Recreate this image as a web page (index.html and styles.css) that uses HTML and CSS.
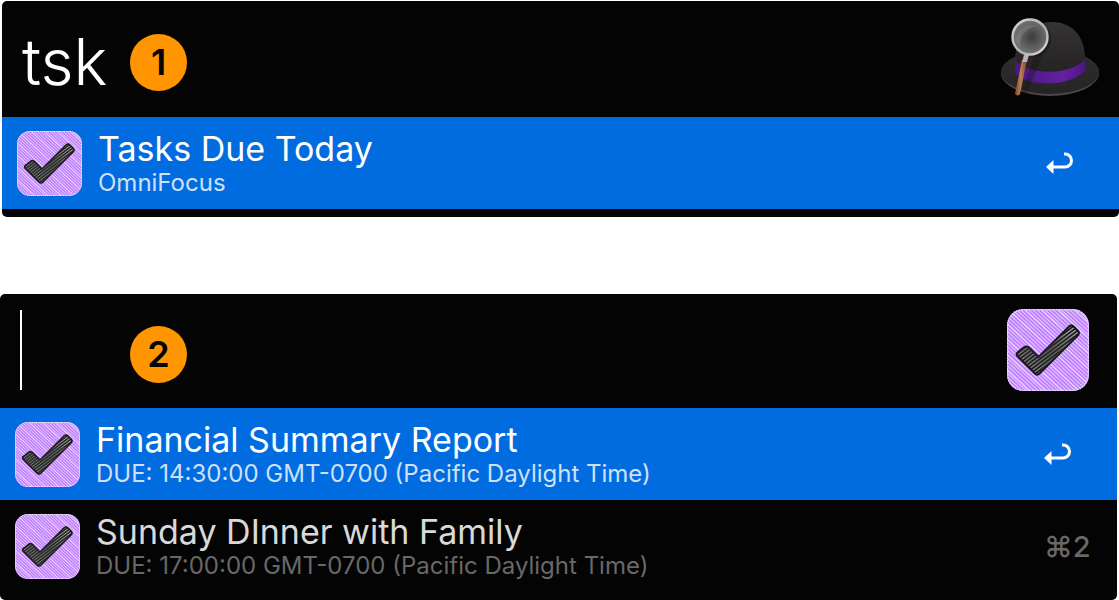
FILE: index.html
```html
<!DOCTYPE html>
<html lang="en">
<head>
    <meta charset="UTF-8">
    <meta name="viewport" content="width=device-width, initial-scale=1.0">
    <title>Tasks Due Today</title>
    <link rel="stylesheet" href="styles.css">
</head>
<body>
    <!-- shared icons -->
    <svg class="defs" width="0" height="0" aria-hidden="true">
        <defs>
            <pattern id="hatch" width="2.2" height="2.2" patternUnits="userSpaceOnUse" patternTransform="rotate(-47)">
                <rect width="2.2" height="2.2" fill="#bf7dff"/>
                <rect width="0.8" height="2.2" fill="#e6ccff"/>
            </pattern>
            <pattern id="hatchWide" width="9" height="9" patternUnits="userSpaceOnUse" patternTransform="rotate(-47)">
                <rect width="0.8" height="9" fill="#fff" opacity="0.55"/>
            </pattern>
            <pattern id="ink" width="2.4" height="2.4" patternUnits="userSpaceOnUse" patternTransform="rotate(53)">
                <rect width="2.4" height="2.4" fill="#141414"/>
                <rect width="1" height="2.4" fill="#c4c4c4"/>
            </pattern>
            <linearGradient id="inkShade" x1="0" y1="1" x2="1" y2="0">
                <stop offset="0" stop-color="#222" stop-opacity="0.2"/>
                <stop offset="0.5" stop-color="#333" stop-opacity="0.7"/>
                <stop offset="1" stop-color="#222" stop-opacity="0"/>
            </linearGradient>
            <symbol id="task" viewBox="0 0 65 65">
                <rect width="65" height="65" rx="13" fill="url(#hatch)"/>
                <rect x="0.5" y="0.5" width="64" height="64" rx="12.5" fill="url(#hatchWide)" stroke="#f0e0ff" stroke-width="1" stroke-dasharray="1.2 0.8"/>
                <path d="M9 34 L14 30 Q16 29 18 31 L25 38 L49 14 Q51 12 53 14 L56 17 Q58 19 56 21 L26 51 Q24 53 22 51 L8 37 Q7 35 9 34Z" fill="url(#ink)" stroke="#161616" stroke-width="1.6" stroke-linejoin="round"/>
                <path d="M9 34 L14 30 Q16 29 18 31 L25 38 L49 14 Q51 12 53 14 L56 17 Q58 19 56 21 L26 51 Q24 53 22 51 L8 37 Q7 35 9 34Z" fill="url(#inkShade)"/>
            </symbol>
            <symbol id="enter" viewBox="0 0 28 24">
                <path d="M18 3 H19 A6 6 0 0 1 19 16 H6" fill="none" stroke="#fff" stroke-width="3"/>
                <path d="M0 16 L7.5 9 V23Z" fill="#fff"/>
            </symbol>
        </defs>
    </svg>

    <section class="panel first">
        <div class="search">
            <input class="query" type="text" value="tsk" aria-label="Search">
            <span class="badge">1</span>
            <svg class="hat" viewBox="0 0 98 82" aria-hidden="true">
                <defs>
                    <linearGradient id="crown" x1="0" y1="0" x2="0" y2="1">
                        <stop offset="0" stop-color="#363334"/>
                        <stop offset="1" stop-color="#211f20"/>
                    </linearGradient>
                    <linearGradient id="brim" x1="0" y1="0" x2="0" y2="1">
                        <stop offset="0" stop-color="#302e2f"/>
                        <stop offset="1" stop-color="#252324"/>
                    </linearGradient>
                    <linearGradient id="band">
                        <stop offset="0" stop-color="#4a1780"/>
                        <stop offset="0.35" stop-color="#551c8e"/>
                        <stop offset="0.7" stop-color="#6420a0"/>
                        <stop offset="1" stop-color="#4d1782"/>
                    </linearGradient>
                    <radialGradient id="glass" cx="0.55" cy="0.5" r="0.6">
                        <stop offset="0" stop-color="#3c3c3c"/>
                        <stop offset="1" stop-color="#808080"/>
                    </radialGradient>
                    <linearGradient id="rim" x1="0" y1="0" x2="1" y2="1">
                        <stop offset="0" stop-color="#d4d4d4"/>
                        <stop offset="0.6" stop-color="#b2b2b2"/>
                        <stop offset="1" stop-color="#e0e0e0"/>
                    </linearGradient>
                    <linearGradient id="wood">
                        <stop offset="0" stop-color="#7d4c30"/>
                        <stop offset="0.5" stop-color="#bd8055"/>
                        <stop offset="1" stop-color="#74452b"/>
                    </linearGradient>
                </defs>
                <ellipse cx="49" cy="56" rx="49" ry="23" fill="#494748"/>
                <ellipse cx="49" cy="55" rx="49" ry="22" fill="url(#brim)"/>
                <path d="M14 58 V42 C15 16 33 5 51 5 C70 5 84 18 84 42 V55 C70 68 28 68 14 58Z" fill="url(#crown)"/>
                <path d="M14 43 C29 59 68 58 84 43 V54 C68 70 30 70 14 57Z" fill="url(#band)"/>
                <path d="M33 38 L43 35 L25 77 L20 79Z" fill="#111" opacity="0.3"/>
                <circle cx="32" cy="22" r="18" fill="#121212" opacity="0.5"/>
                <path d="M21 43 L26 43 L19 77 Q17 80 14 77Z" fill="url(#wood)"/>
                <path d="M23 38 H28 L26 45 H21Z" fill="#b4b4b4"/>
                <circle cx="29" cy="20" r="17.5" fill="url(#glass)" stroke="url(#rim)" stroke-width="2.4"/>
                <path d="M15 25 C15 13 23 7 36 8 C25 12 19 18 19 29Z" fill="#aaa" opacity="0.25"/>
            </svg>
        </div>
        <button class="row selected" type="button">
            <svg class="icon" aria-hidden="true"><use href="#task"/></svg>
            <span class="text">
                <span class="title">Tasks Due Today</span>
                <span class="subtitle">OmniFocus</span>
            </span>
            <span class="key"><svg class="enter" aria-hidden="true"><use href="#enter"/></svg></span>
        </button>
    </section>

    <section class="panel second">
        <div class="search">
            <span class="caret"></span>
            <input class="query" type="text" value="" aria-label="Filter tasks">
            <span class="badge">2</span>
            <svg class="big" aria-hidden="true"><use href="#task"/></svg>
        </div>
        <button class="row selected" type="button">
            <svg class="icon" aria-hidden="true"><use href="#task"/></svg>
            <span class="text">
                <span class="title">Financial Summary Report</span>
                <span class="subtitle">DUE: 14:30:00 GMT-0700 (Pacific Daylight Time)</span>
            </span>
            <span class="key"><svg class="enter" aria-hidden="true"><use href="#enter"/></svg></span>
        </button>
        <button class="row" type="button">
            <svg class="icon" aria-hidden="true"><use href="#task"/></svg>
            <span class="text">
                <span class="title">Sunday DInner with Family</span>
                <span class="subtitle">DUE: 17:00:00 GMT-0700 (Pacific Daylight Time)</span>
            </span>
            <span class="key">⌘2</span>
        </button>
    </section>
</body>
</html>
```
FILE: styles.css
```css
*{
    margin: 0;
    padding: 0;
    box-sizing: border-box;
}
body{
    background-color: #fff;
    font-family: Inter, "Liberation Sans", sans-serif;
}
.defs{
    position: absolute;
}
.panel{
    padding-bottom: 8px;
    border-radius: 5px;
    background-color: #040404;
    overflow: hidden;
}
.first{
    margin: 1px 0 77px 2px;
}
.second{
    margin-right: 2px;
}
.search{
    position: relative;
    display: flex;
    align-items: center;
    padding: 15px 20px 17px;
}
.first .search{
    padding: 16px 20px 18px;
}
.query{
    flex: 1;
    min-width: 0;
    height: 82px;
    padding-top: 6px;
    border: none;
    outline: none;
    background: transparent;
    color: #fff;
    font-family: inherit;
    font-size: 64px;
    font-weight: 300;
}
.caret{
    width: 2px;
    height: 80px;
    background-color: #fff;
}
.badge{
    position: absolute;
    top: 32px;
    left: 130px;
    width: 57px;
    height: 57px;
    border-radius: 50%;
    background-color: #ff9500;
    color: #040404;
    font-size: 36px;
    font-weight: 600;
    line-height: 57px;
    text-align: center;
}
.first .badge{
    top: 33px;
    left: 128px;
}
.hat{
    width: 98px;
    height: 82px;
}
.big{
    width: 82px;
    height: 82px;
    margin: 0 8px;
}
.row{
    display: flex;
    align-items: center;
    gap: 16px;
    width: 100%;
    height: 92px;
    padding: 0 28px 0 15px;
    border: none;
    background: transparent;
    color: #d9d9d9;
    font-family: inherit;
    text-align: left;
}
.icon{
    flex: none;
    width: 65px;
    height: 65px;
}
.text{
    flex: 1;
    min-width: 0;
    padding-bottom: 1px;
}
.title,.subtitle{
    display: block;
    white-space: nowrap;
}
.title{
    font-size: 34px;
    line-height: 41px;
}
.subtitle{
    color: #686868;
    font-size: 24px;
    line-height: 28px;
}
.key{
    width: 45px;
    color: #686868;
    font-size: 29px;
    font-weight: 500;
    white-space: nowrap;
}
.enter{
    display: block;
    width: 28px;
    height: 24px;
}
.selected{
    background-color: #006ce0;
    color: #fff;
}
.selected .subtitle{
    color: #cfe0f8;
}
```
